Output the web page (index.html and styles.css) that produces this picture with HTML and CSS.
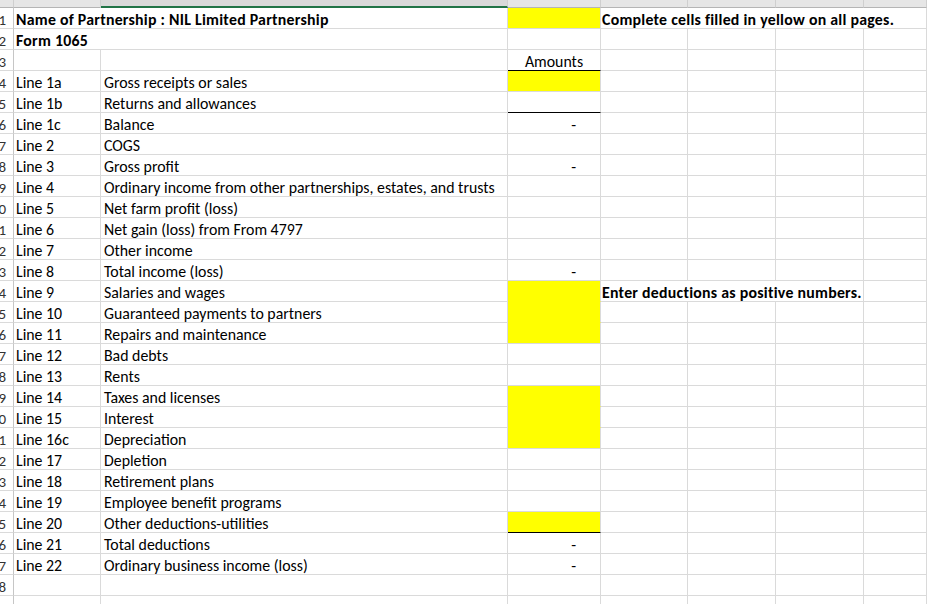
FILE: index.html
```html
<!DOCTYPE html>
<html>
<head>
<meta charset="utf-8">
<link rel="stylesheet" href="styles.css">
</head>
<body>
<div class="sheet">
  <div class="ch corner"></div>
  <div class="ch"><span>A</span></div>
  <div class="ch sel"><span>B</span></div>
  <div class="ch"><span>C</span></div>
  <div class="ch"><span>D</span></div>
  <div class="ch"><span>E</span></div>
  <div class="ch"><span>F</span></div>
  <div class="ch"><span>G</span></div>

  <div class="rh"><span>1</span></div>
  <div class="c span2 b">Name of Partnership : NIL Limited Partnership</div>
  <div class="c amt y"></div>
  <div class="c span4 b dtext">Complete cells filled in yellow on all pages.</div>

  <div class="rh"><span>2</span></div>
  <div class="c span2 b">Form 1065</div>
  <div class="c amt"></div><div class="c"></div><div class="c"></div><div class="c"></div><div class="c"></div>

  <div class="rh"><span>3</span></div>
  <div class="c"></div><div class="c"></div>
  <div class="c amt center ul">Amounts</div><div class="c"></div><div class="c"></div><div class="c"></div><div class="c"></div>

  <div class="rh"><span>4</span></div>
  <div class="c">Line 1a</div><div class="c desc">Gross receipts or sales</div>
  <div class="c amt y"></div><div class="c"></div><div class="c"></div><div class="c"></div><div class="c"></div>

  <div class="rh"><span>5</span></div>
  <div class="c">Line 1b</div><div class="c desc">Returns and allowances</div>
  <div class="c amt ul"></div><div class="c"></div><div class="c"></div><div class="c"></div><div class="c"></div>

  <div class="rh"><span>6</span></div>
  <div class="c">Line 1c</div><div class="c desc">Balance</div>
  <div class="c amt dash">-</div><div class="c"></div><div class="c"></div><div class="c"></div><div class="c"></div>

  <div class="rh"><span>7</span></div>
  <div class="c">Line 2</div><div class="c desc">COGS</div>
  <div class="c amt"></div><div class="c"></div><div class="c"></div><div class="c"></div><div class="c"></div>

  <div class="rh"><span>8</span></div>
  <div class="c">Line 3</div><div class="c desc">Gross profit</div>
  <div class="c amt dash">-</div><div class="c"></div><div class="c"></div><div class="c"></div><div class="c"></div>

  <div class="rh"><span>9</span></div>
  <div class="c">Line 4</div><div class="c desc">Ordinary income from other partnerships, estates, and trusts</div>
  <div class="c amt"></div><div class="c"></div><div class="c"></div><div class="c"></div><div class="c"></div>

  <div class="rh"><span>10</span></div>
  <div class="c">Line 5</div><div class="c desc">Net farm profit (loss)</div>
  <div class="c amt"></div><div class="c"></div><div class="c"></div><div class="c"></div><div class="c"></div>

  <div class="rh"><span>11</span></div>
  <div class="c">Line 6</div><div class="c desc">Net gain (loss) from From 4797</div>
  <div class="c amt"></div><div class="c"></div><div class="c"></div><div class="c"></div><div class="c"></div>

  <div class="rh"><span>12</span></div>
  <div class="c">Line 7</div><div class="c desc">Other income</div>
  <div class="c amt"></div><div class="c"></div><div class="c"></div><div class="c"></div><div class="c"></div>

  <div class="rh"><span>13</span></div>
  <div class="c">Line 8</div><div class="c desc">Total income (loss)</div>
  <div class="c amt dash">-</div><div class="c"></div><div class="c"></div><div class="c"></div><div class="c"></div>

  <div class="rh"><span>14</span></div>
  <div class="c">Line 9</div><div class="c desc">Salaries and wages</div>
  <div class="c amt y yc"></div>
  <div class="c span3 b dtext">Enter deductions as positive numbers.</div><div class="c"></div>

  <div class="rh"><span>15</span></div>
  <div class="c">Line 10</div><div class="c desc">Guaranteed payments to partners</div>
  <div class="c amt y yc"></div><div class="c"></div><div class="c"></div><div class="c"></div><div class="c"></div>

  <div class="rh"><span>16</span></div>
  <div class="c">Line 11</div><div class="c desc">Repairs and maintenance</div>
  <div class="c amt y"></div><div class="c"></div><div class="c"></div><div class="c"></div><div class="c"></div>

  <div class="rh"><span>17</span></div>
  <div class="c">Line 12</div><div class="c desc">Bad debts</div>
  <div class="c amt"></div><div class="c"></div><div class="c"></div><div class="c"></div><div class="c"></div>

  <div class="rh"><span>18</span></div>
  <div class="c">Line 13</div><div class="c desc">Rents</div>
  <div class="c amt"></div><div class="c"></div><div class="c"></div><div class="c"></div><div class="c"></div>

  <div class="rh"><span>19</span></div>
  <div class="c">Line 14</div><div class="c desc">Taxes and licenses</div>
  <div class="c amt y yc"></div><div class="c"></div><div class="c"></div><div class="c"></div><div class="c"></div>

  <div class="rh"><span>20</span></div>
  <div class="c">Line 15</div><div class="c desc">Interest</div>
  <div class="c amt y yc"></div><div class="c"></div><div class="c"></div><div class="c"></div><div class="c"></div>

  <div class="rh"><span>21</span></div>
  <div class="c">Line 16c</div><div class="c desc">Depreciation</div>
  <div class="c amt y"></div><div class="c"></div><div class="c"></div><div class="c"></div><div class="c"></div>

  <div class="rh"><span>22</span></div>
  <div class="c">Line 17</div><div class="c desc">Depletion</div>
  <div class="c amt"></div><div class="c"></div><div class="c"></div><div class="c"></div><div class="c"></div>

  <div class="rh"><span>23</span></div>
  <div class="c">Line 18</div><div class="c desc">Retirement plans</div>
  <div class="c amt"></div><div class="c"></div><div class="c"></div><div class="c"></div><div class="c"></div>

  <div class="rh"><span>24</span></div>
  <div class="c">Line 19</div><div class="c desc">Employee benefit programs</div>
  <div class="c amt"></div><div class="c"></div><div class="c"></div><div class="c"></div><div class="c"></div>

  <div class="rh"><span>25</span></div>
  <div class="c">Line 20</div><div class="c desc">Other deductions-utilities</div>
  <div class="c amt y ul"></div><div class="c"></div><div class="c"></div><div class="c"></div><div class="c"></div>

  <div class="rh"><span>26</span></div>
  <div class="c">Line 21</div><div class="c desc">Total deductions</div>
  <div class="c amt dash">-</div><div class="c"></div><div class="c"></div><div class="c"></div><div class="c"></div>

  <div class="rh"><span>27</span></div>
  <div class="c">Line 22</div><div class="c desc">Ordinary business income (loss)</div>
  <div class="c amt dash">-</div><div class="c"></div><div class="c"></div><div class="c"></div><div class="c"></div>

  <div class="rh"><span>28</span></div>
  <div class="c"></div><div class="c"></div>
  <div class="c amt"></div><div class="c"></div><div class="c"></div><div class="c"></div><div class="c"></div>

  <div class="rh"><span>29</span></div>
  <div class="c"></div><div class="c"></div>
  <div class="c amt"></div><div class="c"></div><div class="c"></div><div class="c"></div><div class="c"></div>
</div>
</body>
</html>
```
FILE: styles.css
```css
html, body {
  margin: 0;
  padding: 0;
  background: #ffffff;
  overflow: hidden;
}

body {
  font-family: Carlito, Calibri, Lato, "Liberation Sans", sans-serif;
  font-size: 15.85px;
  color: #000;
}

.sheet {
  display: grid;
  grid-template-columns: 14px 87px 407px 93px 87px 88px 88px 1fr;
  grid-auto-rows: 21px;
  grid-template-rows: 8px;
  width: 927px;
  height: 604px;
  overflow: hidden;
}

.ch {
  box-sizing: border-box;
  background: #e6e6e6;
  border-right: 1px solid #cfcfcf;
  border-bottom: 1px solid #b5b5b5;
  overflow: hidden;
  display: flex;
  justify-content: center;
  align-items: flex-end;
  color: #444;
  font-size: 15px;
}

.ch span {
  line-height: 15px;
  margin-bottom: 5px;
}

.ch.sel {
  border-bottom: 2px solid #217346;
  background: #d9d9d9;
  color: #1e5a36;
}

.ch.corner {
  background: #e6e6e6;
}

.rh {
  box-sizing: border-box;
  border-right: 1px solid #c6c6c6;
  border-bottom: 1px solid #dadada;
  overflow: hidden;
  display: flex;
  justify-content: flex-end;
  align-items: flex-start;
  padding-top: 2px;
  padding-right: 7px;
  color: #333;
  white-space: nowrap;
  font-size: 15px;
}

.rh span,
.c {
  line-height: 20px;
}

.c {
  box-sizing: border-box;
  border-right: 1px solid #dadada;
  border-bottom: 1px solid #dadada;
  padding: 2px 2px 0 2px;
  white-space: nowrap;
}

.desc {
  padding-left: 3px;
}

.span2 { grid-column: span 2; }
.span3 { grid-column: span 3; }
.span4 { grid-column: span 4; }

.b {
  font-weight: bold;
  letter-spacing: 0.25px;
}

.dtext { padding-left: 1px; }

.y {
  background: #ffff00;
}

.yc {
  border-bottom-color: #ffff00;
}

.center { text-align: center; }

.ul {
  border-bottom-color: #000;
}

.dash {
  text-align: right;
  padding-right: 24px;
}
```
